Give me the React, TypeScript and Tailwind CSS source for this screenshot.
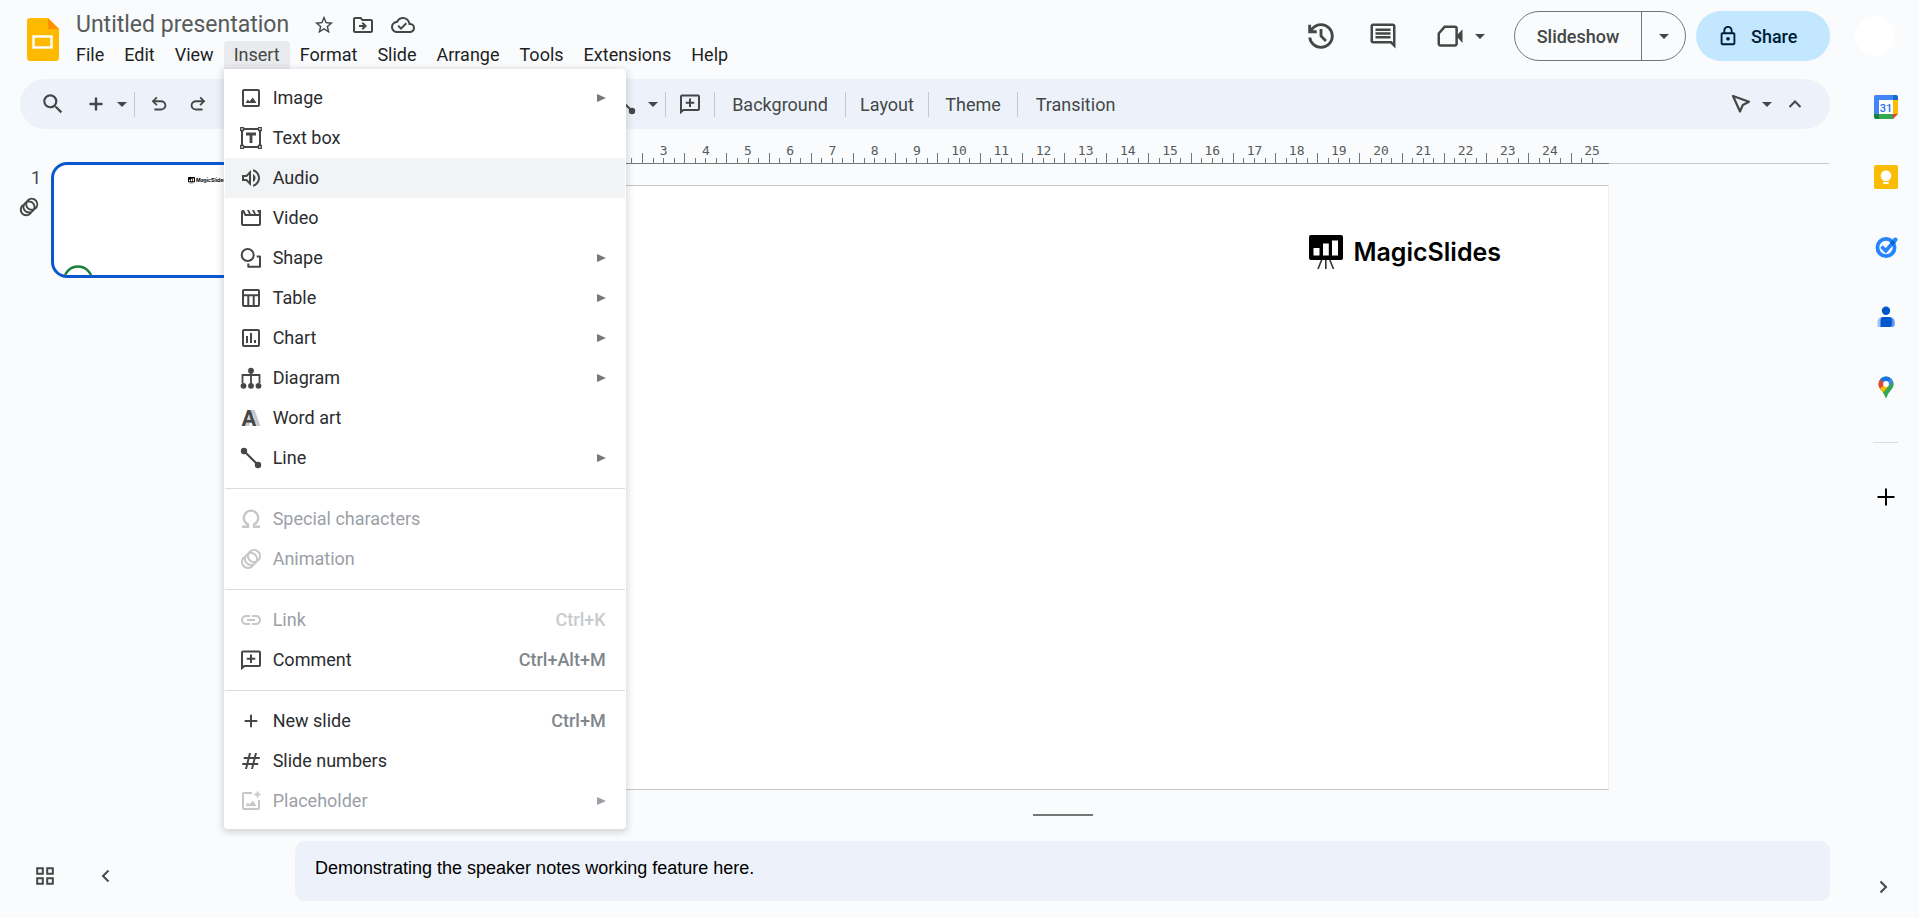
import type { ReactNode } from "react";
import {
  MdAnimation,
  MdLink,
  MdNumbers,
  MdOutlineCloudDone,
  MdOutlineComment,
  MdOutlineDriveFileMove,
  MdOutlineLock,
  MdOutlineMovieCreation,
  MdOutlineVolumeUp,
  MdSearch,
  MdStarBorder,
} from "react-icons/md";

type IconProps = { className?: string; children?: ReactNode };

function Glyph({ className = "size-6", children }: IconProps) {
  return (
    <svg viewBox="0 0 24 24" className={className} fill="none" stroke="currentColor" strokeWidth="2" aria-hidden="true">
      {children}
    </svg>
  );
}

const Caret = () => (
  <svg viewBox="0 0 10 5" className="h-[5px] w-[10px]" fill="currentColor" aria-hidden="true">
    <path d="M0 0h10L5 5z" />
  </svg>
);

const ImageIcon = () => (
  <Glyph>
    <rect x="4" y="4" width="16" height="16" rx="1" />
    <path d="M6.500 17l2.300-3.600 1.700 2.100L13.800 11.500l3.700 5.500z" fill="currentColor" stroke="none" />
  </Glyph>
);

const TextBoxIcon = () => (
  <Glyph>
    <path d="M3 5v14M21 5v14M5 3h14M5 21h14" />
    <path d="M1.700 1.700h2.800v2.800H1.700zM19.500 1.700h2.800v2.800h-2.800zM1.700 19.500h2.800v2.800H1.700zM19.500 19.500h2.800v2.800h-2.800z" strokeWidth="1.300" fill="white" />
    <path d="M7 8h10M12 8v9" strokeWidth="2.800" />
  </Glyph>
);

const ShapeIcon = () => (
  <Glyph>
    <circle cx="8.700" cy="9" r="6" />
    <path d="M17.700 10.500H21v10.300H9.300v-3.300" strokeLinejoin="round" />
  </Glyph>
);

const TableIcon = () => (
  <Glyph>
    <rect x="4" y="4" width="16" height="16" rx="1" />
    <path d="M4 9.200h16M9.300 9.200V20M14.700 9.200V20" />
  </Glyph>
);

const ChartIcon = () => (
  <Glyph>
    <rect x="4" y="4" width="16" height="16" rx="1" />
    <path d="M8 10v7M12 7v10M16 14v3" />
  </Glyph>
);

const DiagramIcon = () => (
  <Glyph>
    <path d="M12 5v14M3.500 17V9h17v8" strokeWidth="1.800" />
    <g fill="currentColor" stroke="none">
      <circle cx="12" cy="4.700" r="2.900" />
      <circle cx="4.500" cy="19.800" r="2.900" />
      <circle cx="12" cy="19.800" r="2.900" />
      <circle cx="19.500" cy="19.800" r="2.900" />
    </g>
  </Glyph>
);

const WordArtIcon = () => (
  <Glyph>
    <g stroke="none" fontFamily="Roboto, sans-serif" fontWeight="700" fontSize="22" textAnchor="middle">
      <text x="14" y="20" fill="#c7c7c7">A</text>
      <text x="10" y="20" fill="currentColor">A</text>
    </g>
  </Glyph>
);

const LineIcon = ({ className }: IconProps) => (
  <Glyph className={className}>
    <path d="M5 5l14 14" />
    <circle cx="5" cy="5" r="3.200" fill="currentColor" stroke="none" />
    <circle cx="19" cy="19" r="3.200" fill="currentColor" stroke="none" />
  </Glyph>
);

const SymbolIcon = () => (
  <Glyph>
    <path d="M3 19.800h6v-2.400a7.200 7.200 0 1 1 6 0v2.400h6" strokeWidth="2.400" />
  </Glyph>
);

const AddCommentIcon = ({ className }: IconProps) => (
  <Glyph className={className}>
    <path d="M3 20V4.500a1 1 0 0 1 1-1h16a1 1 0 0 1 1 1V17a1 1 0 0 1-1 1H5.500z" />
    <path d="M2 17v5l4-4z" fill="currentColor" stroke="none" />
    <path d="M12 6.500v8.500M7.750 10.750h8.500" />
  </Glyph>
);

const PlusIcon = () => (
  <Glyph>
    <path d="M12 5.700v12.600M5.700 12h12.600" />
  </Glyph>
);

const PlaceholderIcon = () => (
  <Glyph>
    <path d="M13 4H5a1 1 0 0 0-1 1v14a1 1 0 0 0 1 1h14a1 1 0 0 0 1-1v-8" />
    <path d="M18.500 2.500v6M15.500 5.500h6" strokeWidth="1.800" />
    <path d="M6.500 17l2.300-3.400 1.700 2 3.300-3.800 3.700 5.200z" fill="currentColor" stroke="none" />
  </Glyph>
);

const UndoIcon = ({ className }: IconProps) => (
  <svg viewBox="0 0 24 24" className={className} fill="currentColor" aria-hidden="true">
    <path d="M7 19v-2h7.100q1.575 0 2.738-1T18 13.500 16.838 11 14.100 10H7.800l2.600 2.600L9 14 4 9l5-5 1.400 1.400L7.800 8h6.300q2.425 0 4.163 1.575T20 13.500t-1.738 3.925T14.100 19z" />
  </svg>
);

const HistoryIcon = () => (
  <svg viewBox="0 0 24 24" className="size-[34px]" fill="currentColor" aria-hidden="true">
    <path d="M12 21q-3.450 0-6.012-2.287T3.050 13H5.100q.350 2.600 2.313 4.300T12 19q2.925 0 4.963-2.037T19 12t-2.037-4.962T12 5q-1.725 0-3.225.8T6.250 8H9v2H3V4h2v2.350q1.275-1.600 3.113-2.475T12 3q1.875 0 3.513.713t2.850 1.924 1.925 2.850T21 12t-.712 3.513-1.925 2.850-2.850 1.925T12 21m2.800-4.800L11 12.400V7h2v4.600l3.200 3.200z" />
  </svg>
);

const MeetIcon = () => (
  <Glyph className="size-[30px]">
    <path d="M3 10l4.800-5.500h8a1.500 1.500 0 0 1 1.500 1.500v12a1.500 1.500 0 0 1-1.500 1.500H4.500A1.500 1.500 0 0 1 3 18z" strokeLinejoin="round" />
    <path d="M17 12l5-5.500v11z" fill="currentColor" stroke="none" />
  </Glyph>
);

const CalendarIcon = () => (
  <svg viewBox="0 0 24 24" className="size-6" aria-hidden="true">
    <path d="M5 5h14v14H5z" fill="#fff" />
    <path d="M0 2a2 2 0 0 1 2-2h17v5H5v14H0z" fill="#4285f4" />
    <path d="M19 0h3a2 2 0 0 1 2 2v3h-5z" fill="#1967d2" />
    <path d="M19 5h5v14h-5z" fill="#fbbc04" />
    <path d="M5 19h14v5H5z" fill="#34a853" />
    <path d="M0 19h5v5H2a2 2 0 0 1-2-2z" fill="#188038" />
    <path d="M19 19h5l-5 5z" fill="#ea4335" />
    <text x="12" y="16.500" fontFamily="Roboto, sans-serif" fontWeight="500" fontSize="11" textAnchor="middle" fill="#1a73e8">31</text>
  </svg>
);

const KeepIcon = () => (
  <svg viewBox="0 0 24 24" className="size-6" aria-hidden="true">
    <rect width="24" height="24" rx="2" fill="#fbbc04" />
    <path d="M12 5.500a5.200 5.200 0 0 0-2.700 9.650V16h5.400v-.850A5.200 5.200 0 0 0 12 5.500zM9.300 17h5.400v2H9.300z" fill="#fff" />
  </svg>
);

const TasksIcon = () => (
  <svg viewBox="0 0 24 24" className="size-6" fill="none" aria-hidden="true">
    <circle cx="12" cy="12.500" r="8.600" stroke="#2684fc" strokeWidth="3.800" />
    <path d="M7.500 11.500l4.300 4.300L20 6.500" stroke="#2684fc" strokeWidth="3.600" />
    <path d="M17.200 9.200l3.300-3.400" stroke="#0066da" strokeWidth="4" />
    <circle cx="21.300" cy="4.700" r="2.300" fill="#2684fc" />
  </svg>
);

const ContactsIcon = () => (
  <svg viewBox="0 0 24 24" className="size-6" aria-hidden="true">
    <circle cx="12" cy="5.700" r="4.200" fill="#0057cc" />
    <path d="M3.500 17a5 5 0 0 1 5-5H10v10H3.500z" fill="#a0c3ff" />
    <path d="M14 12h2a5 5 0 0 1 4.700 5v2.500A2.500 2.500 0 0 1 18.200 22H14z" fill="#5e97f6" />
    <path d="M6.500 15a3 3 0 0 1 3-3h5.300a3 3 0 0 1 3 3v4a3 3 0 0 1-3 3H6.500z" fill="#0057cc" />
  </svg>
);

const MapsIcon = () => (
  <svg viewBox="0 0 24 24" className="size-6" aria-hidden="true">
    <defs>
      <clipPath id="maps-pin">
        <path d="M12 1.500a7.500 7.500 0 0 0-7.500 7.500c0 2.600 1.300 4.400 3 6.500 2 2.500 3.200 4 3.700 6.200.2.600.400.900.8.900s.6-.3.8-.9c.5-2.200 1.700-3.700 3.700-6.200 1.700-2.100 3-3.900 3-6.500A7.500 7.500 0 0 0 12 1.500z" />
      </clipPath>
    </defs>
    <g clipPath="url(#maps-pin)">
      <path d="M0 0h24v24H0z" fill="#34a853" />
      <path d="M0 0l6.200 4.200L12 9l-6.500 7.500L0 14z" fill="#ea4335" />
      <path d="M12 9l3 2.500-7 8-4-4.500z" fill="#fbbc04" />
      <path d="M6.200 4.200L12 9l6-7L12 0 4 0z" fill="#1a73e8" />
      <path d="M12 9l5.500-6.500L22 6l-7 5z" fill="#4285f4" />
      <path d="M19.500 5.800L8 18.500 12 24h12V5z" fill="#34a853" />
    </g>
    <circle cx="12" cy="9" r="2.900" fill="#fff" />
  </svg>
);

const BoardMark = ({ className }: IconProps) => (
  <svg viewBox="0 0 34 34" className={className} aria-hidden="true">
    <path d="M13 24L9 34M16.800 24v10M20.500 24l4 10" stroke="#333" strokeWidth="1.600" />
    <rect width="34" height="25" rx="2" fill="#000" />
    <path d="M4.500 13h6v7.500h-6zM14 8.500h5.800v12H14zM23 5.500h6v15h-6z" fill="#fff" />
  </svg>
);

type Entry = { label: string; icon: ReactNode; submenu?: boolean; shortcut?: string; disabled?: boolean; active?: boolean };

const insertMenu: Entry[][] = [
  [
    { label: "Image", icon: <ImageIcon />, submenu: true },
    { label: "Text box", icon: <TextBoxIcon /> },
    { label: "Audio", icon: <MdOutlineVolumeUp className="size-6" />, active: true },
    { label: "Video", icon: <MdOutlineMovieCreation className="size-6" /> },
    { label: "Shape", icon: <ShapeIcon />, submenu: true },
    { label: "Table", icon: <TableIcon />, submenu: true },
    { label: "Chart", icon: <ChartIcon />, submenu: true },
    { label: "Diagram", icon: <DiagramIcon />, submenu: true },
    { label: "Word art", icon: <WordArtIcon /> },
    { label: "Line", icon: <LineIcon />, submenu: true },
  ],
  [
    { label: "Special characters", icon: <SymbolIcon />, disabled: true },
    { label: "Animation", icon: <MdAnimation className="size-6" />, disabled: true },
  ],
  [
    { label: "Link", icon: <MdLink className="size-6" />, shortcut: "Ctrl+K", disabled: true },
    { label: "Comment", icon: <AddCommentIcon />, shortcut: "Ctrl+Alt+M" },
  ],
  [
    { label: "New slide", icon: <PlusIcon />, shortcut: "Ctrl+M" },
    { label: "Slide numbers", icon: <MdNumbers className="size-6" /> },
    { label: "Placeholder", icon: <PlaceholderIcon />, submenu: true, disabled: true },
  ],
];

function MenuRow({ label, icon, submenu, shortcut, disabled, active }: Entry) {
  return (
    <button
      role="menuitem"
      disabled={disabled}
      className={`flex h-10 w-full items-center pl-[14px] pr-[19px] text-left ${active ? "bg-[#f1f3f4]" : ""} ${
        disabled ? "text-[#9aa0a6]" : "text-[#2b2c2f]"
      }`}
    >
      <span className={`mr-[10px] ${disabled ? "text-[#c7c7c7]" : "text-[#444746]"}`}>{icon}</span>
      <span className="flex-1">{label}</span>
      {shortcut && <span className={`font-medium ${disabled ? "text-[#c9cbcd]" : "text-[#80868b]"}`}>{shortcut}</span>}
      {submenu && (
        <svg viewBox="0 0 9 8" className={`h-2 w-[9px] ${disabled ? "text-[#9aa0a6]" : "text-[#777]"}`} fill="currentColor" aria-hidden="true">
          <path d="M0 0l9 4-9 4z" />
        </svg>
      )}
    </button>
  );
}

function InsertMenu() {
  return (
    <div
      role="menu"
      aria-label="Insert"
      className="absolute left-0 top-full z-10 w-[402px] rounded-b-[4px] rounded-tr-[4px] bg-white px-px pb-2 pt-[9px] text-[18px] leading-6 shadow-[0_2px_6px_2px_rgba(60,64,67,0.18)]"
    >
      {insertMenu.map((group, i) => (
        <div key={i} className={i ? "mt-[10px] border-t border-[#dadce0] pt-[10px]" : ""}>
          {group.map((entry) => (
            <MenuRow key={entry.label} {...entry} />
          ))}
        </div>
      ))}
    </div>
  );
}

const menus = ["File", "Edit", "View", "Insert", "Format", "Slide", "Arrange", "Tools", "Extensions", "Help"];

function Header() {
  return (
    <header className="flex items-start pl-[27px]">
      <svg viewBox="0 0 32 43" className="mt-[18px] h-[43px] w-8" role="img" aria-label="Slides">
        <path d="M3 0h18l11 11v29a3 3 0 0 1-3 3H3a3 3 0 0 1-3-3V3a3 3 0 0 1 3-3z" fill="#ffba00" />
        <path d="M21 0l11 11H21z" fill="#ff9200" />
        <rect x="6.500" y="18.500" width="18" height="11" fill="none" stroke="#fff" strokeWidth="2.400" />
      </svg>
      <div className="ml-[7px]">
        <div className="flex h-[41px] items-center gap-4 pl-[10px] pt-[9px] text-[#444746]">
          <h1 className="mr-2 text-[23px] leading-7 text-[#575a5a]">Untitled presentation</h1>
          <button aria-label="Star"><MdStarBorder className="size-[22px]" /></button>
          <button aria-label="Move"><MdOutlineDriveFileMove className="size-6" /></button>
          <button aria-label="Saved"><MdOutlineCloudDone className="size-6" /></button>
        </div>
        <nav className="flex text-[18px] leading-7 text-[#1f1f1f]">
          {menus.map((name) => (
            <div key={name} className="relative">
              <button className={`h-7 rounded-t-[4px] px-[10px] ${name === "Insert" ? "bg-[#e8eaed] text-[#444746]" : ""}`}>{name}</button>
              {name === "Insert" && <InsertMenu />}
            </div>
          ))}
        </nav>
      </div>
      <div className="ml-auto flex items-center pr-6 pt-[11px] text-[#444746]">
        <button aria-label="History"><HistoryIcon /></button>
        <button aria-label="Comments" className="ml-[30px]"><MdOutlineComment className="size-[30px]" /></button>
        <button aria-label="Meet" className="ml-[37px] flex items-center gap-[10px]"><MeetIcon /><Caret /></button>
        <div className="ml-[29px] flex h-[50px] rounded-full border border-[#747775] text-[18px] font-medium">
          <button className="w-[127px] border-r border-[#747775]">Slideshow</button>
          <button aria-label="Slideshow options" className="flex w-[43px] items-center justify-center"><Caret /></button>
        </div>
        <button className="ml-[10px] flex h-[50px] w-[134px] items-center gap-3 rounded-full bg-[#c2e7ff] pl-[21px] text-[18px] font-medium text-[#001d35]">
          <MdOutlineLock className="size-[22px]" />
          Share
        </button>
        <button aria-label="Account" className="ml-[25px] size-10 rounded-full bg-white" />
      </div>
    </header>
  );
}

const Rule = ({ className = "" }: IconProps) => <span className={`h-[25px] w-px bg-[#c7c7c7] ${className}`} />;

function Toolbar() {
  return (
    <div className="ml-5 flex h-[50px] items-center rounded-full bg-[#edf2fa] text-[18px] text-[#444746]">
      <div className="flex w-[593px] items-center pl-5">
        <button aria-label="Search"><MdSearch className="size-[26px]" /></button>
        <button aria-label="New slide" className="ml-[18px]">
          <Glyph className="size-6"><path d="M12 5.500v13M5.500 12h13" strokeWidth="2.400" /></Glyph>
        </button>
        <button aria-label="New slide options" className="ml-[9px]"><Caret /></button>
        <Rule className="ml-[7px]" />
        <button aria-label="Undo" className="ml-[13px]"><UndoIcon className="size-[22px]" /></button>
        <button aria-label="Redo" className="ml-[17px]"><UndoIcon className="size-[22px] -scale-x-100" /></button>
      </div>
      <button aria-label="Line"><LineIcon className="size-6" /></button>
      <button aria-label="Line options" className="ml-[11px]"><Caret /></button>
      <Rule className="ml-[7px]" />
      <button aria-label="Add comment" className="mx-3"><AddCommentIcon className="size-6" /></button>
      <Rule />
      <button className="w-[130px]">Background</button>
      <Rule />
      <button className="w-[82px]">Layout</button>
      <Rule />
      <button className="w-[88px]">Theme</button>
      <Rule />
      <button className="w-[115px]">Transition</button>
      <div className="ml-auto flex items-center pr-[29px]">
        <button aria-label="Select mode">
          <Glyph className="size-6"><path d="M4 4l16 5.800-6.200 3.200L11 19.500z" strokeLinejoin="round" strokeWidth="2.200" /></Glyph>
        </button>
        <button aria-label="Mode options" className="ml-[9px]"><Caret /></button>
        <button aria-label="Hide menus" className="ml-[17px]">
          <Glyph className="h-3 w-3"><path d="M1 18L12 7l11 11" strokeWidth="4" /></Glyph>
        </button>
      </div>
    </div>
  );
}

const UNITS = 25.4;
const percent = (v: number) => `${(v / UNITS) * 100}%`;

function Ruler() {
  const quarters = Array.from({ length: 101 }, (_, i) => i / 4);
  const units = Array.from({ length: 25 }, (_, i) => i + 1);
  return (
    <svg className="h-[23px] w-full border-b border-[#747775]" aria-hidden="true">
      <g stroke="#747775" shapeRendering="crispEdges">
        {quarters.map((q) => (
          <line key={q} x1={percent(q)} x2={percent(q)} y1={q % 1 === 0.5 ? 12 : 17} y2="22" />
        ))}
      </g>
      <g fontFamily="'DejaVu Sans Mono', monospace" fontSize="13" textAnchor="middle" fill="#575a5a">
        {units.map((u) => (
          <text key={u} x={percent(u)} y="14">{u}</text>
        ))}
      </g>
    </svg>
  );
}

function Filmstrip() {
  return (
    <aside className="flex w-[295px] shrink-0 flex-col">
      <div className="flex pl-[18px] pt-[33px]">
        <div className="flex w-[33px] flex-col items-start text-[#444746]">
          <span className="mt-1 pl-[13px] text-[18px] leading-6">1</span>
          <MdAnimation className="mt-[6px] size-[22px]" />
        </div>
        <button aria-label="Slide 1" className="flex h-[116px] w-[205px] flex-col justify-between overflow-hidden rounded-[16px] border-[3px] border-[#0b57d0] bg-white">
          <span className="ml-[134px] mt-[11px] flex items-center gap-px font-[Inter] text-[5px] font-bold leading-[8px] text-black">
            <BoardMark className="size-[7px]" />
            MagicSlides
          </span>
          <svg viewBox="0 0 30 10" className="ml-[9px] h-[10px] w-[30px]" aria-hidden="true">
            <circle cx="15" cy="15.500" r="14" fill="none" stroke="#188038" strokeWidth="2.500" />
          </svg>
        </button>
      </div>
      <div className="mt-auto flex items-center pb-[30px] pl-[33px] text-[#444746]">
        <button aria-label="Grid view">
          <Glyph className="size-6"><path d="M4.200 4.200h5.600v5.600H4.200zM14.200 4.200h5.600v5.600h-5.600zM4.200 14.200h5.600v5.600H4.200zM14.200 14.200h5.600v5.600h-5.600z" /></Glyph>
        </button>
        <button aria-label="Collapse filmstrip" className="ml-[43px]">
          <Glyph className="h-3 w-3"><path d="M17 1L6 12l11 11" strokeWidth="4" /></Glyph>
        </button>
      </div>
    </aside>
  );
}

function Canvas() {
  return (
    <main className="flex flex-1 flex-col">
      <div className="flex pt-[12px]">
        <span className="w-[242px]" />
        <div className="flex-1"><Ruler /></div>
        <span className="mr-px w-[220px] border-b border-[#c7c7c7]" />
      </div>
      <section aria-label="Slide" className="ml-[242px] mr-[221px] mt-[21px] flex flex-1 items-start justify-end border border-x-[#f1f1f1] border-y-[#c4c7c5] bg-white">
        <div className="mr-[107px] mt-[49px] flex items-center gap-[10px]">
          <BoardMark className="size-[34px]" />
          <span className="font-[Inter] text-[25px] font-semibold leading-[34px] text-black">MagicSlides</span>
        </div>
      </section>
      <div className="flex h-[51px] items-start justify-center pt-6">
        <span className="h-[2px] w-[60px] bg-[#747775]" />
      </div>
      <label htmlFor="notes" className="sr-only">Speaker notes</label>
      <textarea
        id="notes"
        rows={1}
        defaultValue="Demonstrating the speaker notes working feature here."
        className="mb-[17px] block h-[60px] w-full resize-none rounded-[10px] bg-[#edf2fa] px-5 pt-[15px] font-['Liberation_Sans',Arial,sans-serif] text-[18px] leading-6 text-black outline-none"
      />
    </main>
  );
}

function SideRail() {
  const apps: [string, ReactNode][] = [
    ["Calendar", <CalendarIcon />],
    ["Keep", <KeepIcon />],
    ["Tasks", <TasksIcon />],
    ["Contacts", <ContactsIcon />],
    ["Maps", <MapsIcon />],
  ];
  return (
    <aside className="flex w-[89px] shrink-0 flex-col items-center pb-[19px] pl-[43px] pr-[21px] pt-4">
      <div className="flex flex-col gap-[46px]">
        {apps.map(([name, icon]) => (
          <button key={name} aria-label={name}>{icon}</button>
        ))}
      </div>
      <hr className="mb-[42px] mt-[43px] w-[25px] border-[#dadce0]" />
      <button aria-label="Get add-ons">
        <Glyph className="size-6 text-black"><path d="M12 3.500v17M3.500 12h17" /></Glyph>
      </button>
      <button aria-label="Hide side panel" className="mt-auto text-[#444746]">
        <Glyph className="h-6 w-3"><path d="M1 1l11 11L1 23" strokeWidth="4" /></Glyph>
      </button>
    </aside>
  );
}

export default function App() {
  return (
    <div className="flex min-h-screen flex-col bg-[#f9fbfd] font-[Roboto,sans-serif] [&_svg]:block">
      <Header />
      <div className="mt-[10px] flex flex-1">
        <div className="flex flex-1 flex-col">
          <Toolbar />
          <div className="flex flex-1">
            <Filmstrip />
            <Canvas />
          </div>
        </div>
        <SideRail />
      </div>
    </div>
  );
}
